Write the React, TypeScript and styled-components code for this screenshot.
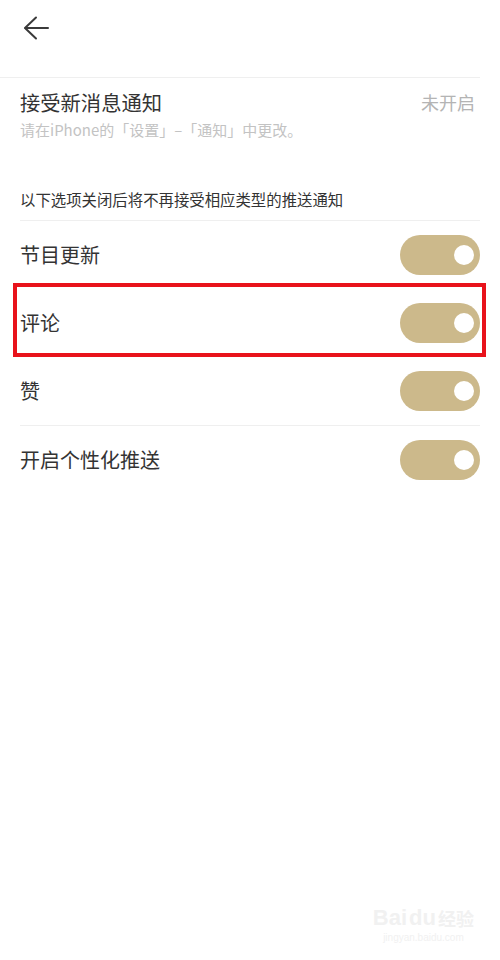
import React from "react";
import styled, { createGlobalStyle } from "styled-components";

const GlobalStyle = createGlobalStyle`
  html, body {
    margin: 0;
    padding: 0;
    background: #ffffff;
  }
  body {
    font-family: "Noto Sans CJK SC", "Noto Sans", sans-serif;
    color: #333333;
  }
`;

const Page = styled.div`
  width: 500px;
  height: 960px;
  background: #ffffff;
  position: relative;
  overflow: hidden;
`;

const Header = styled.div`
  height: 77px;
  box-sizing: border-box;
  padding: 16px 0 0 23px;
  display: flex;
  align-items: flex-start;
`;

const BackButton = styled.button`
  border: 0;
  background: none;
  padding: 0;
  width: 28px;
  height: 24px;
  display: flex;
  cursor: pointer;
`;

const Divider = styled.div<{ $inset?: boolean }>`
  height: 1px;
  background: #efefef;
  margin: 0 20px 0 ${(p) => (p.$inset ? "20px" : "0")};
`;

const NotifyBlock = styled.div`
  padding: 13px 20px 0 20px;
`;

const TitleRow = styled.div`
  display: flex;
  justify-content: space-between;
  align-items: flex-start;
`;

const Title = styled.div`
  font-size: 20.3px;
  line-height: 22px;
  color: #333333;
`;

const Status = styled.div`
  font-size: 18px;
  line-height: 22px;
  color: #b4b4b4;
  padding-right: 5px;
`;

const Sub = styled.div`
  margin-top: 9px;
  font-size: 15px;
  line-height: 16px;
  color: #c3c3c3;
`;

const Note = styled.div`
  padding: 53px 20px 12px 20px;
  font-size: 15.4px;
  line-height: 17px;
  color: #333333;
`;

const List = styled.div`
  display: flex;
  flex-direction: column;
`;

const Row = styled.div`
  position: relative;
  height: 68px;
  padding: 0 20px;
  display: flex;
  align-items: center;
  justify-content: space-between;
`;

const Label = styled.div`
  font-size: 20px;
  line-height: 22px;
  color: #333333;
`;

const Toggle = styled.button<{ $on: boolean }>`
  width: 80px;
  height: 40px;
  border-radius: 20px;
  border: 0;
  padding: 0;
  background: ${(p) => (p.$on ? "#ccb98b" : "#e5e5e5")};
  position: relative;
  cursor: pointer;
  &::after {
    content: "";
    position: absolute;
    top: 10px;
    ${(p) => (p.$on ? "right: 6px;" : "left: 6px;")}
    width: 20px;
    height: 20px;
    border-radius: 50%;
    background: #ffffff;
  }
`;

const Highlight = styled.div`
  position: absolute;
  left: 13px;
  right: 14px;
  top: -6px;
  bottom: 0;
  border: 4px solid #e8121b;
  box-sizing: border-box;
  pointer-events: none;
`;

const Watermark = styled.div`
  position: absolute;
  right: 26px;
  bottom: 16px;
  display: flex;
  flex-direction: column;
  align-items: center;
  color: #f1f1f1;
  font-family: "Liberation Sans", sans-serif;
`;

const WmTop = styled.div`
  display: flex;
  align-items: flex-end;
  font-size: 22px;
  font-weight: bold;
  line-height: 24px;
  gap: 2px;
`;

const WmCjk = styled.span`
  font-family: "Noto Sans CJK SC", sans-serif;
  font-size: 18px;
`;

const WmBottom = styled.div`
  font-size: 10px;
  line-height: 12px;
  margin-top: 2px;
`;

const items = [
  { label: "节目更新", on: true, divider: false, highlight: false },
  { label: "评论", on: true, divider: false, highlight: true },
  { label: "赞", on: true, divider: false, highlight: false },
  { label: "开启个性化推送", on: true, divider: true, highlight: false },
];

export default function App() {
  return (
    <Page>
      <GlobalStyle />
      <Header>
        <BackButton aria-label="返回">
          <svg width="28" height="24" viewBox="0 0 28 24" fill="none">
            <polyline
              points="13,1.5 2,12 13,22.5"
              stroke="#3a3a3a"
              strokeWidth="2"
              strokeLinecap="round"
              strokeLinejoin="round"
            />
            <line x1="2.5" y1="12" x2="25" y2="12" stroke="#3a3a3a" strokeWidth="2" strokeLinecap="round" />
          </svg>
        </BackButton>
      </Header>
      <Divider />
      <NotifyBlock>
        <TitleRow>
          <Title>接受新消息通知</Title>
          <Status>未开启</Status>
        </TitleRow>
        <Sub>请在iPhone的「设置」–「通知」中更改。</Sub>
      </NotifyBlock>
      <Note>以下选项关闭后将不再接受相应类型的推送通知</Note>
      <Divider $inset />
      <List>
        {items.map((it) => (
          <React.Fragment key={it.label}>
            {it.divider && <Divider $inset />}
            <Row>
              <Label>{it.label}</Label>
              <Toggle $on={it.on} aria-label={it.label} />
              {it.highlight && <Highlight />}
            </Row>
          </React.Fragment>
        ))}
      </List>
      <Watermark>
        <WmTop>
          <span>Bai</span>
          <span>du</span>
          <WmCjk>经验</WmCjk>
        </WmTop>
        <WmBottom>jingyan.baidu.com</WmBottom>
      </Watermark>
    </Page>
  );
}
